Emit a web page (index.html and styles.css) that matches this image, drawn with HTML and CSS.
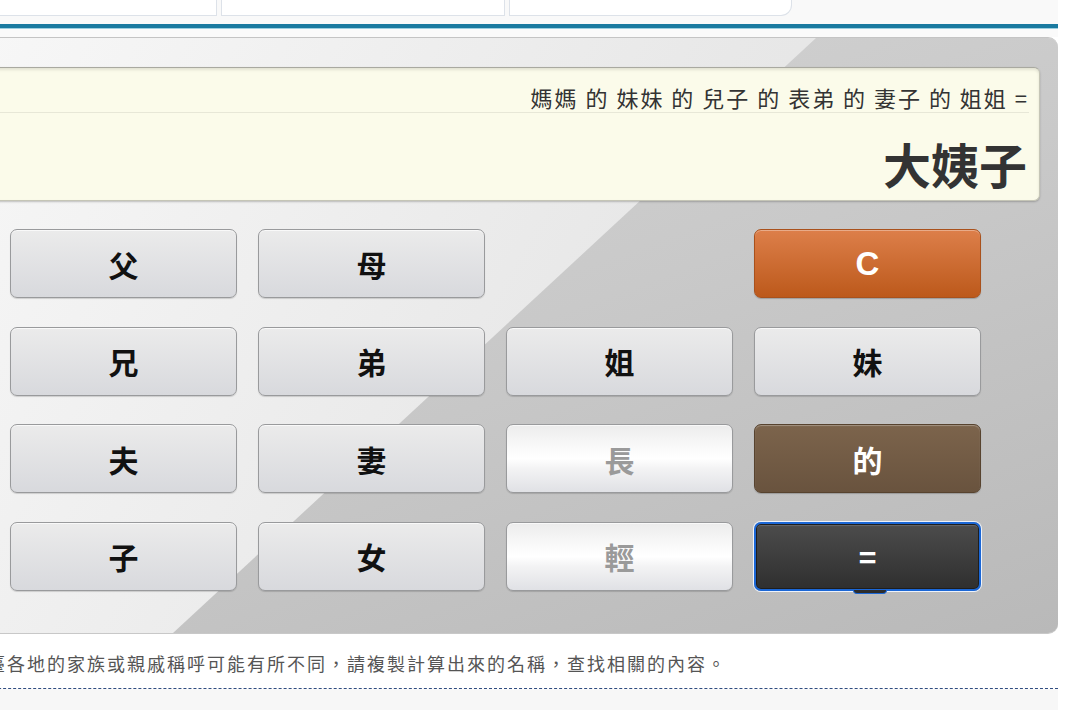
FILE: index.html
```html
<!DOCTYPE html>
<html lang="zh-Hant">
<head>
<meta charset="utf-8">
<title>親戚稱呼計算機</title>
<link rel="stylesheet" href="styles.css">
</head>
<body>
<div class="page">
  <nav class="tabs">
    <div class="tab"></div>
    <div class="tab"></div>
    <div class="tab last"></div>
  </nav>
  <div class="rule"></div>
  <div class="gap"></div>
  <main class="content">
    <section class="calc">
      <div class="display">
        <div class="expr">媽媽 的 妹妹 的 兒子 的 表弟 的 妻子 的 姐姐 =</div>
        <div class="result">大姨子</div>
      </div>
      <div class="keys">
        <button class="key">父</button>
        <button class="key">母</button>
        <span class="blank"></span>
        <button class="key clear">C</button>
        <button class="key">兄</button>
        <button class="key">弟</button>
        <button class="key">姐</button>
        <button class="key">妹</button>
        <button class="key">夫</button>
        <button class="key">妻</button>
        <button class="key light">長</button>
        <button class="key of">的</button>
        <button class="key">子</button>
        <button class="key">女</button>
        <button class="key light">輕</button>
        <button class="key equal">=</button>
      </div>
    </section>
    <p class="note">港澳臺各地的家族或親戚稱呼可能有所不同，請複製計算出來的名稱，查找相關的內容。</p>
  </main>
  <div class="foot"></div>
</div>
</body>
</html>
```

FILE: styles.css
```css
html, body {
  margin: 0;
  padding: 0;
  background: #ffffff;
  height: 100%;
  overflow: hidden;
}

body {
  font-family: "Noto Sans CJK TC", "Noto Sans", sans-serif;
}

.page {
  margin-left: -67px;
  width: 1125px;
  background: #f9f9f9;
  min-height: 710px;
}

.tabs {
  display: flex;
  gap: 4px;
  height: 17px;
}

.tab {
  width: 282px;
  height: 15px;
  background: #ffffff;
  border: 1px solid #dde2e9;
  border-top: none;
}

.tab.last {
  width: 281px;
  border-bottom-right-radius: 11px;
}

.rule {
  margin-top: 7px;
  height: 4px;
  background: #1a7aa0;
  border-bottom: 1px solid #9ccfe0;
}

.gap {
  height: 8px;
  background: #fafafa;
}

.content {
  background: #ffffff;
}

.calc {
  position: relative;
  box-sizing: border-box;
  height: 597px;
  padding: 30px 18px 0;
  border-radius: 10px;
  border-top: 1px solid #c4c4c4;
  border-bottom: 1px solid #c8c8c8;
  background: linear-gradient(120deg, #f8f8f8 0%, #e8e8e8 55%, #dedede 100%);
  overflow: hidden;
}

.calc::before {
  content: "";
  position: absolute;
  inset: 0;
  clip-path: polygon(883px 0, 100% 0, 100% 100%, 240px 100%);
  background: linear-gradient(160deg, #d6d6d6 0%, #c9c9c9 50%, #b9b9b9 100%);
}

.display {
  position: relative;
  box-sizing: border-box;
  height: 134px;
  margin-top: -1px;
  background: #fbfbea;
  border: 1px solid #c5c5b6;
  border-top-color: #a9a9a0;
  border-radius: 6px;
  box-shadow: 0 1px 2px rgba(0, 0, 0, 0.22), inset 0 2px 3px rgba(0, 0, 0, 0.10);
  padding: 0 12px 0 0;
  color: #333333;
  text-align: right;
}

.expr {
  padding-top: 14px;
  line-height: 30px;
  font-size: 22px;
  letter-spacing: 2px;
  margin-right: -2px;
  border-bottom: 1px solid #e7e7d7;
  white-space: nowrap;
}

.result {
  padding-top: 12px;
  line-height: 76px;
  font-size: 48px;
  font-weight: 700;
}

.keys {
  position: relative;
  display: grid;
  grid-template-columns: repeat(4, 227px);
  grid-auto-rows: 69px;
  column-gap: 21px;
  row-gap: 28.5px;
  justify-content: center;
  margin-top: 28px;
}

.key {
  position: relative;
  display: flex;
  align-items: center;
  justify-content: center;
  margin: 0;
  padding: 0;
  border: 1px solid #999a9c;
  border-radius: 7px;
  background: linear-gradient(#ebebeb, #d8d9dd);
  box-shadow: 0 1px 1px rgba(0, 0, 0, 0.15), inset 0 1px 0 rgba(255, 255, 255, 0.7);
  font-family: "Noto Sans CJK TC", sans-serif;
  font-size: 30px;
  font-weight: 700;
  color: #111111;
  cursor: pointer;
}

.key.clear {
  background: linear-gradient(#dd7f4a, #bc591b);
  border-color: #a9511c;
  color: #ffffff;
  font-family: "Liberation Sans", Arial, sans-serif;
  font-size: 33px;
  box-shadow: 0 1px 1px rgba(0, 0, 0, 0.2), inset 0 1px 0 rgba(255, 255, 255, 0.35);
}

.key.light {
  background: linear-gradient(#ececec 0%, #fafafa 35%, #ffffff 50%, #f3f3f4 65%, #e0e1e5 100%);
  color: #9a9a9a;
}

.key.of {
  background: linear-gradient(#7c644c, #69533e);
  border-color: #57432f;
  color: #ffffff;
  box-shadow: 0 1px 1px rgba(0, 0, 0, 0.2), inset 0 1px 1px rgba(255, 255, 255, 0.3);
}

.key.equal {
  background: linear-gradient(#4c4c4c, #2f2f2f);
  border: 2px solid #1b67d6;
  color: #ffffff;
  box-shadow: 0 0 0 1px #eef3fb, inset 0 0 0 1px #1e1e1e, inset 0 2px 1px rgba(255, 255, 255, 0.15);
}

.key.equal::after {
  content: "";
  position: absolute;
  left: 50%;
  bottom: -5px;
  width: 32px;
  height: 3px;
  margin-left: -15px;
  background: #2c2c2c;
  border: 1px solid #1b67d6;
  border-top: none;
  border-radius: 0 0 4px 4px;
}

.note {
  margin: 0;
  padding: 14px 0 10px 14px;
  line-height: 30px;
  font-size: 18px;
  letter-spacing: 2px;
  color: #555555;
  white-space: nowrap;
  border-bottom: 1px dashed #2f4c80;
}

.foot {
  height: 30px;
  background: #f7f7f7;
}
```
